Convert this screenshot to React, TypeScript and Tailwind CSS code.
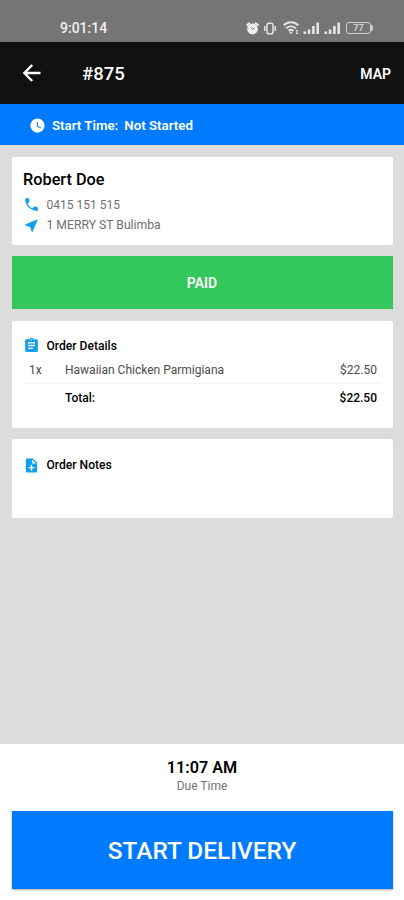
import { ReactNode } from 'react'
import {
  MdAssignment,
  MdNearMe,
  MdNoteAdd,
  MdPhone,
  MdWatchLater,
} from 'react-icons/md'

interface OrderItem {
  quantity: number
  name: string
  price: number
}

const items: OrderItem[] = [
  { quantity: 1, name: 'Hawaiian Chicken Parmigiana', price: 22.5 },
]

const total = items.reduce((sum, item) => sum + item.quantity * item.price, 0)

function formatPrice(value: number) {
  return `$${value.toFixed(2)}`
}

function SignalIcon() {
  return (
    <svg width="18" height="13" viewBox="0 0 18 13" fill="currentColor">
      <rect x="0.5" y="9.5" width="2.6" height="2.5" />
      <rect x="4.8" y="7.5" width="2.6" height="4.5" />
      <rect x="9.1" y="4" width="2.6" height="8" />
      <rect x="13.4" y="0.5" width="2.6" height="11.5" />
    </svg>
  )
}

function StatusBar() {
  return (
    <div className="flex h-[42px] shrink-0 items-center bg-[#757575] pt-[14px] pr-[31px] pl-[60px] text-[#e4e4e4]">
      <span className="text-[14px] leading-4 font-medium text-[#f0f0f0]">
        9:01:14
      </span>
      <div className="ml-auto flex items-center">
        <svg width="13" height="13" viewBox="0 0 13 13" fill="none">
          <circle cx="6.5" cy="7" r="5.4" fill="#f0f0f0" />
          <path
            d="M1.2 3 3.3 1.2M11.8 3 9.7 1.2"
            stroke="#f0f0f0"
            strokeWidth="2"
            strokeLinecap="round"
          />
          <path d="M4.6 5.4 6.5 7.3 8.5 6" stroke="#757575" strokeWidth="1" />
        </svg>
        <svg
          width="14"
          height="13"
          viewBox="0 0 14 13"
          fill="none"
          stroke="currentColor"
          strokeWidth="1.5"
          className="ml-[4px]"
        >
          <rect x="4" y="1.2" width="6" height="10.6" rx="1.8" />
          <path d="M1.8 4v5M12.2 4v5" />
        </svg>
        <svg
          width="17"
          height="14"
          viewBox="0 0 17 14"
          fill="none"
          stroke="currentColor"
          strokeWidth="1.9"
          className="ml-[6px]"
        >
          <path d="M.8 4.3C5 .3 11 .3 15.2 4.3M3.2 7.2c2.8-2.5 6.8-2.5 9.6 0M5.5 9.8c1.5-1.3 3.5-1.3 5 0" />
          <path d="M6 10.8h4L8 13.2z" fill="currentColor" stroke="none" />
          <path d="M14 9v4" strokeWidth="2" strokeDasharray="1.6 0.8" />
        </svg>
        <div className="ml-[3px] flex gap-[3px]">
          <SignalIcon />
          <SignalIcon />
        </div>
        <div className="ml-[4px] flex items-center text-[#cfcfcf]">
          <span className="flex h-[12px] w-[25px] items-center justify-center rounded-[3px] border-[1.5px] border-current text-[9px] leading-none font-bold">
            77
          </span>
          <span className="h-[6px] w-[2px] rounded-r-full bg-current" />
        </div>
      </div>
    </div>
  )
}

function Header() {
  return (
    <header className="flex h-[62px] shrink-0 items-center bg-[#111111] pr-[13px] pl-5 text-white">
      <svg
        width="24"
        height="24"
        viewBox="0 0 24 24"
        fill="none"
        stroke="currentColor"
        strokeWidth="2.4"
      >
        <path d="M20.5 12H4.8M12.2 4 4.4 12l7.8 8" />
      </svg>
      <h1 className="ml-[38px] pt-1 text-[18.5px] font-medium">#875</h1>
      <button className="ml-auto pt-0.5 text-[14px] font-semibold">MAP</button>
    </header>
  )
}

interface CardProps {
  className: string
  children: ReactNode
}

function Card({ className, children }: CardProps) {
  return (
    <section className={`rounded-[2px] bg-white ${className}`}>
      {children}
    </section>
  )
}

export default function App() {
  return (
    <div
      className="flex h-[900px] w-[404px] flex-col overflow-hidden bg-[#dcdcdc] text-black"
      style={{ fontFamily: 'Roboto, sans-serif' }}
    >
      <StatusBar />
      <Header />

      <div className="flex h-[41px] shrink-0 items-center bg-[#007bff] pt-0.5 pl-[29px] text-[13.3px] font-semibold text-white">
        <MdWatchLater className="mr-[6px] size-[17px]" />
        <span>Start Time:</span>
        <span className="ml-[6px]">Not Started</span>
      </div>

      <main className="flex grow flex-col px-[11.5px] pt-3">
        <Card className="h-[88px] px-[11.5px] pt-[11px]">
          <h2 className="text-[16.3px] leading-6 font-medium">Robert Doe</h2>
          <div className="mt-[2px] flex h-[21px] items-center text-[12px] text-[#707070]">
            <MdPhone className="mr-[6.5px] size-[17px] text-[#129fec]" />
            <span className="pt-px">0415 151 515</span>
          </div>
          <div className="flex h-[21px] items-center text-[12.2px] text-[#707070]">
            <MdNearMe className="mr-[6.5px] size-[17px] text-[#129fec]" />
            1 MERRY ST Bulimba
          </div>
        </Card>

        <div className="mt-[11px] flex h-[53px] items-center justify-center bg-[#34c759] pt-0.5 text-[14px] font-semibold text-white">
          PAID
        </div>

        <Card className="mt-[11.5px] h-[107.5px] px-[11.5px] pt-[16px]">
          <h3 className="flex h-[18px] items-center text-[12.1px] font-medium">
            <MdAssignment className="mr-[6.5px] size-[17px] text-[#129fec]" />
            <span className="pt-px">Order Details</span>
          </h3>
          {items.map((item) => (
            <div
              key={item.name}
              className="flex h-[29px] items-center border-b border-[#f2f2f2] pt-0.5 pr-[4px] pl-[6px] text-[12px] text-[#4a4a4a]"
            >
              <span className="w-[36px]">{item.quantity}x</span>
              <span>{item.name}</span>
              <span className="ml-auto">{formatPrice(item.price)}</span>
            </div>
          ))}
          <div className="flex h-[29px] items-center justify-between pr-[4px] pl-[42px] text-[12px] font-medium">
            <span>Total:</span>
            <span>{formatPrice(total)}</span>
          </div>
        </Card>

        <Card className="mt-[11px] h-[79px] px-[11.5px] pt-[17px]">
          <h3 className="flex h-[18px] items-center text-[12.1px] font-medium">
            <MdNoteAdd className="mr-[6.5px] size-[17px] text-[#129fec]" />
            Order Notes
          </h3>
        </Card>
      </main>

      <footer className="flex h-[156px] shrink-0 flex-col bg-white px-[11.5px] pt-[14px] text-center">
        <strong className="text-[16.2px] leading-5 font-semibold">
          11:07 AM
        </strong>
        <span className="text-[12px] leading-[17px] text-[#757575]">
          Due Time
        </span>
        <button className="mt-[16px] h-[78px] bg-[#007bff] pt-[3px] text-[24.4px] font-medium text-white shadow-[0_1px_2px_rgba(0,0,0,0.35)]">
          START DELIVERY
        </button>
      </footer>
    </div>
  )
}
